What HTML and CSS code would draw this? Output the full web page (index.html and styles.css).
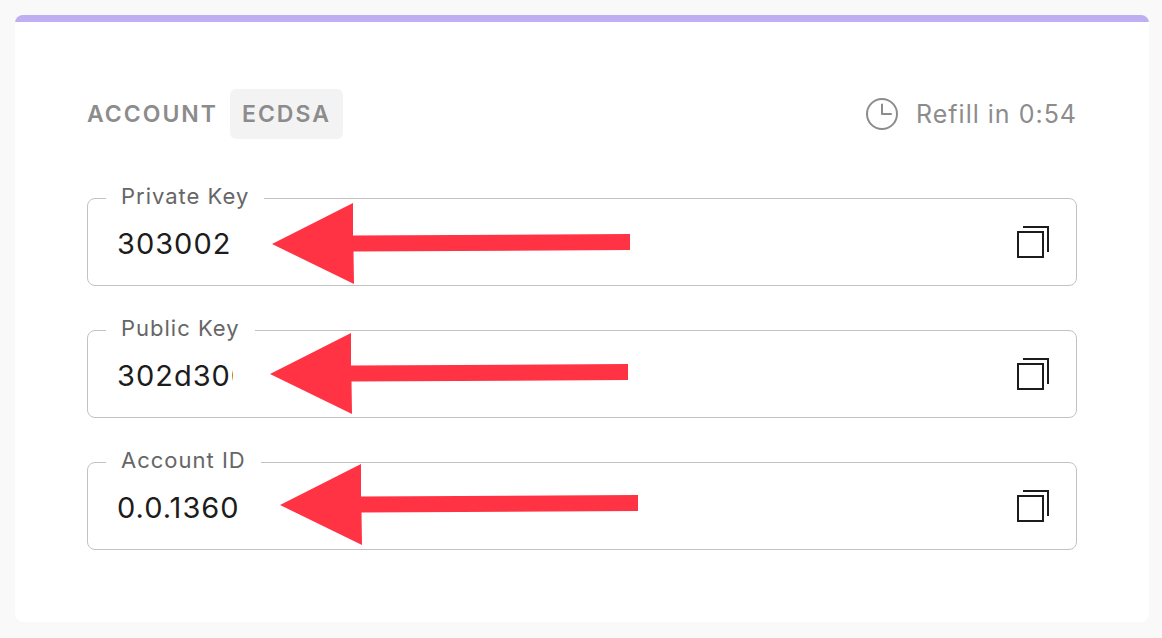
FILE: index.html
```html
<!DOCTYPE html>
<html lang="en">
<head>
<meta charset="utf-8">
<meta name="viewport" content="width=device-width, initial-scale=1">
<title>Account</title>
<link rel="stylesheet" href="styles.css">
</head>
<body>
<svg class="defs" aria-hidden="true">
  <symbol id="copy" viewBox="0 0 32 32">
    <path d="M1 6h25v25H1z M6 1h25v25" fill="none" stroke="currentColor" stroke-width="2"/>
  </symbol>
  <symbol id="arrow" viewBox="0 0 359 82">
    <path d="M0 41L81 0V32.500L358 31V47L81.500 48.500L82 81z" fill="currentColor"/>
  </symbol>
</svg>
<main class="card">
  <header class="header">
    <h1 class="title">Account <span class="chip">ECDSA</span></h1>
    <p class="refill">
      <svg class="clock" viewBox="0 0 32 32" aria-hidden="true"><g fill="none" stroke="currentColor" stroke-width="2"><circle cx="16" cy="16" r="15"/><path d="M16 6.500V16H25" stroke-linecap="round" stroke-linejoin="round"/></g></svg>
      <span>Refill in 0:54</span>
    </p>
  </header>
  <form class="fields">
    <div class="field">
      <fieldset class="outline">
        <legend class="legend"><label for="private-key">Private Key</label></legend>
        <input class="value" id="private-key" type="text" value="303002" readonly>
        <button class="copy" type="button" aria-label="Copy private key"><svg class="copy-icon"><use href="#copy"/></svg></button>
      </fieldset>
      <svg class="arrow arrow-private" aria-hidden="true"><use href="#arrow"/></svg>
    </div>
    <div class="field">
      <fieldset class="outline">
        <legend class="legend"><label for="public-key">Public Key</label></legend>
        <input class="value value-clipped" id="public-key" type="text" value="302d300" readonly>
        <button class="copy" type="button" aria-label="Copy public key"><svg class="copy-icon"><use href="#copy"/></svg></button>
      </fieldset>
      <svg class="arrow arrow-public" aria-hidden="true"><use href="#arrow"/></svg>
    </div>
    <div class="field">
      <fieldset class="outline">
        <legend class="legend"><label for="account-id">Account ID</label></legend>
        <input class="value" id="account-id" type="text" value="0.0.1360" readonly>
        <button class="copy" type="button" aria-label="Copy account ID"><svg class="copy-icon"><use href="#copy"/></svg></button>
      </fieldset>
      <svg class="arrow arrow-account" aria-hidden="true"><use href="#arrow"/></svg>
    </div>
  </form>
</main>
</body>
</html>
```

FILE: styles.css
```css
* { box-sizing: border-box; }

body {
  margin: 0;
  padding: 15px 13px 16px 15px;
  background: #f9f9f9;
  font-family: Inter, "Liberation Sans", sans-serif;
  letter-spacing: 1px;
}

.defs {
  position: absolute;
  width: 0;
  height: 0;
}

.card {
  padding: 74px 72px 72px;
  border-radius: 8px;
  background: linear-gradient(#bfaef2 7px, #fff 7px);
}

.header {
  display: flex;
  justify-content: space-between;
  align-items: center;
  color: #8c8c8c;
}

.title {
  display: flex;
  align-items: center;
  gap: 12px;
  margin: 0;
  font-size: 23px;
  font-weight: 600;
  line-height: 50px;
  letter-spacing: 2px;
  text-transform: uppercase;
}

.chip {
  padding: 0 12px;
  border-radius: 6px;
  background: #f3f3f3;
}

.refill {
  display: flex;
  align-items: center;
  gap: 18px;
  margin: 0;
  font-size: 25px;
  line-height: 32px;
}

.clock {
  width: 32px;
  height: 32px;
}

.fields {
  display: grid;
  gap: 30px;
  margin-top: 45px;
}

.field { position: relative; }

.outline {
  display: flex;
  justify-content: space-between;
  align-items: center;
  min-width: 0;
  margin: 0;
  padding: 0 27px 13px 29px;
  border: 1px solid #c2c2c2;
  border-radius: 8px;
}

.legend {
  margin-left: -11px;
  padding: 0 15px 4px;
  color: #666;
  font-size: 22px;
  line-height: 24px;
}

.value {
  width: 160px;
  height: 60px;
  padding: 2px 0 0;
  border: 0;
  background: transparent;
  color: #1c1c1c;
  font: 29px Inter, "Liberation Sans", sans-serif;
  letter-spacing: inherit;
  outline: 0;
}

.value-clipped { width: 116px; }

.copy {
  display: flex;
  padding: 0;
  border: 0;
  background: none;
  color: #1c1c1c;
  cursor: pointer;
}

.copy-icon {
  width: 32px;
  height: 32px;
}

.arrow {
  position: absolute;
  width: 359px;
  height: 82px;
  color: #ff3344;
  pointer-events: none;
}

.arrow-private { top: 19px; left: 185px; }
.arrow-public { top: 17px; left: 183px; }
.arrow-account { top: 16px; left: 193px; }
```
